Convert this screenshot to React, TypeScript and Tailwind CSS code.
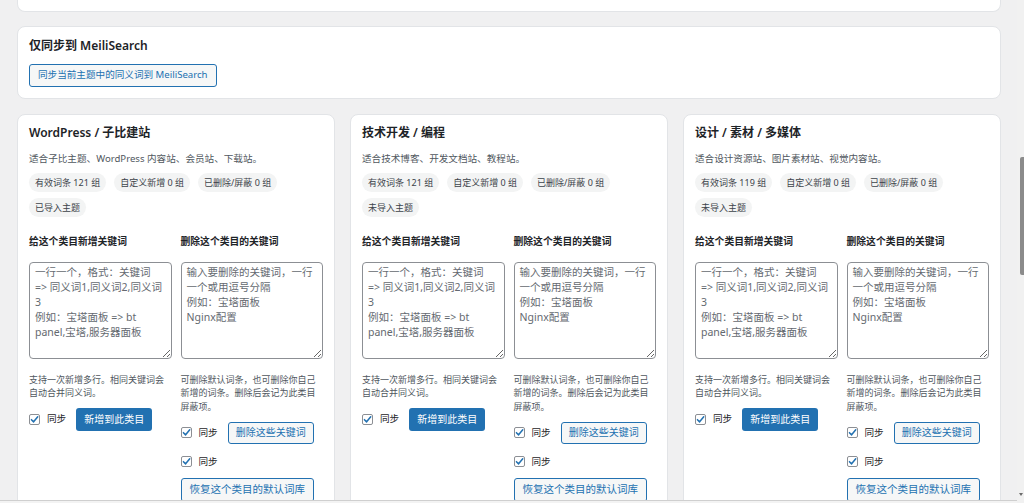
import React from "react";

type Category = {
  title: string;
  desc: string;
  total: number;
  imported: boolean;
};

const categories: Category[] = [
  { title: "WordPress / 子比建站", desc: "适合子比主题、WordPress 内容站、会员站、下载站。", total: 121, imported: true },
  { title: "技术开发 / 编程", desc: "适合技术博客、开发文档站、教程站。", total: 121, imported: false },
  { title: "设计 / 素材 / 多媒体", desc: "适合设计资源站、图片素材站、视觉内容站。", total: 119, imported: false },
];

const addPlaceholder = "一行一个，格式：关键词\n=> 同义词1,同义词2,同义词3\n例如：宝塔面板 => bt panel,宝塔,服务器面板";
const removePlaceholder = "输入要删除的关键词，一行一个或用逗号分隔\n例如：宝塔面板\nNginx配置";

function Check() {
  return (
    <span className="flex h-[11px] w-[11px] shrink-0 items-center justify-center rounded-[2px] border border-[#8c8f94] bg-white">
      <svg width="9" height="9" viewBox="0 0 10 10">
        <path d="M1.6 5.2 L4 7.6 L8.6 2" fill="none" stroke="#2271b1" strokeWidth="1.7" strokeLinecap="round" strokeLinejoin="round" />
      </svg>
    </span>
  );
}

function SyncLabel() {
  return (
    <label className="flex items-center gap-[7px] text-[9.6px] leading-[14px] text-[#1d2327]">
      <Check />
      同步
    </label>
  );
}

function Pill({ children }: { children: React.ReactNode }) {
  return (
    <span className="flex h-[19px] items-center rounded-full bg-[#f3f4f4] px-[6px] text-[9px] text-[#3c434a]">
      {children}
    </span>
  );
}

function CategoryCard({ cat }: { cat: Category }) {
  return (
    <div className="rounded-t-[8px] border border-[#e2e4e7] bg-white px-[11px] pb-4 pt-[10px]">
      <h2 className="text-[12px] font-semibold leading-[16px] text-[#1d2327]">{cat.title}</h2>
      <p className="mt-[11px] text-[9.6px] leading-[14px] text-[#50575e]">{cat.desc}</p>
      <div className="mt-[7px] flex flex-wrap gap-x-[8px] gap-y-[6px]">
        <Pill>有效词条 {cat.total} 组</Pill>
        <Pill>自定义新增 0 组</Pill>
        <Pill>已删除/屏蔽 0 组</Pill>
        <Pill>{cat.imported ? "已导入主题" : "未导入主题"}</Pill>
      </div>
      <div className="mt-[18px] grid grid-cols-2 gap-[9px]">
        <div className="flex flex-col">
          <h3 className="text-[9.8px] font-bold leading-[14px] text-[#1d2327]">给这个类目新增关键词</h3>
          <textarea
            placeholder={addPlaceholder}
            className="mt-[13px] h-[97px] w-full rounded-[4px] border border-[#8c8f94] bg-white px-[5px] py-[2px] text-[10.5px] leading-[15px] text-[#2c3338] placeholder:text-[#646970]"
          />
          <p className="mt-[14px] text-[9px] leading-[13.3px] text-[#50575e]">
            支持一次新增多行。相同关键词会自动合并同义词。
          </p>
          <div className="mt-[8px] flex items-center">
            <SyncLabel />
            <button className="ml-[10px] h-[23px] rounded-[3px] bg-[#2271b1] px-[8px] text-[10px] text-white">
              新增到此类目
            </button>
          </div>
        </div>
        <div className="flex flex-col">
          <h3 className="text-[9.8px] font-bold leading-[14px] text-[#1d2327]">删除这个类目的关键词</h3>
          <textarea
            placeholder={removePlaceholder}
            className="mt-[13px] h-[97px] w-full rounded-[4px] border border-[#8c8f94] bg-white px-[5px] py-[2px] text-[10.5px] leading-[15px] text-[#2c3338] placeholder:text-[#646970]"
          />
          <p className="mt-[14px] text-[9px] leading-[13.3px] text-[#50575e]">
            可删除默认词条，也可删除你自己新增的词条。删除后会记为此类目屏蔽项。
          </p>
          <div className="mt-[9px] flex items-center">
            <SyncLabel />
            <button className="ml-[10px] h-[22px] rounded-[3px] border border-[#2271b1] bg-[#f6f7f7] px-[7px] text-[10px] text-[#2271b1]">
              删除这些关键词
            </button>
          </div>
          <div className="mt-[11px] flex h-[14px] items-center">
            <SyncLabel />
          </div>
          <div className="mt-[9px] flex">
            <button className="h-[24px] rounded-[3px] border border-[#2271b1] bg-[#f6f7f7] px-[8px] text-[10.5px] text-[#2271b1]">
              恢复这个类目的默认词库
            </button>
          </div>
        </div>
      </div>
    </div>
  );
}

export default function App() {
  return (
    <div className="flex h-[503px] w-full overflow-hidden bg-[#f0f0f1] font-['Noto_Sans','Noto_Sans_CJK_SC',sans-serif]">
      <div className="flex min-w-0 flex-1 flex-col">
        <div className="flex-1 overflow-hidden">
          <div className="flex flex-col pl-[17px] pr-[16px]">
            <div className="h-[12px] rounded-b-[8px] border border-t-0 border-[#e2e4e7] bg-white" />
            <section className="mt-[14px] rounded-[8px] border border-[#e2e4e7] bg-white px-[11px] pb-[11px] pt-[11px]">
              <h2 className="text-[12px] font-semibold leading-[16px] text-[#1d2327]">仅同步到 MeiliSearch</h2>
              <button className="mt-[10px] h-[23px] rounded-[3px] border border-[#2271b1] bg-[#f6f7f7] px-[8px] text-[9.6px] text-[#2271b1]">
                同步当前主题中的同义词到 MeiliSearch
              </button>
            </section>
            <div className="mt-[15px] grid grid-cols-3 items-start gap-[15px]">
              {categories.map((c) => (
                <CategoryCard key={c.title} cat={c} />
              ))}
            </div>
          </div>
        </div>
        <div className="h-[3px] border-t border-[#cfcfcf] bg-[#f3f3f3]" />
      </div>
      <div className="flex w-[7px] flex-col bg-[#f1f1f1]">
        <div className="h-[157px]" />
        <div className="ml-[3px] h-[118px] w-[4px] rounded-l-[2px] bg-[#8b8b8b]" />
        <div className="flex-1" />
        <svg width="7" height="6" viewBox="0 0 7 6" className="mb-[5px]">
          <path d="M2 1 L6 1 L4 4 Z" fill="#6b6b6b" />
        </svg>
      </div>
    </div>
  );
}
